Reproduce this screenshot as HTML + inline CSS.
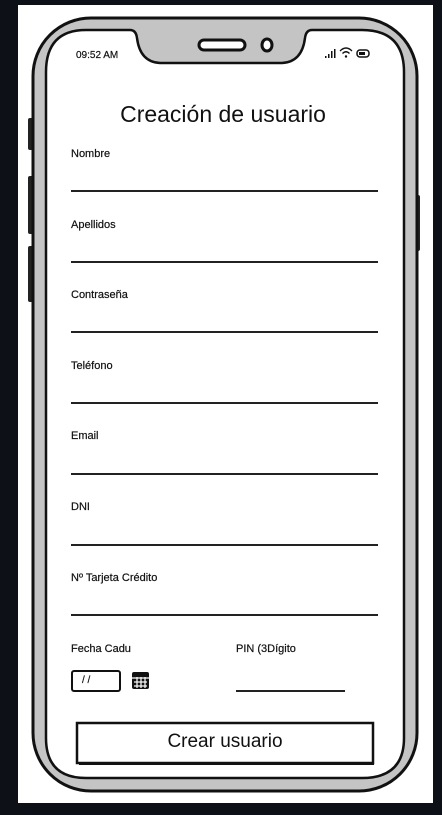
<!DOCTYPE html>
<html><head><meta charset="utf-8"><style>
body{margin:0;width:442px;height:815px;background:#0d1117;position:relative;overflow:hidden;font-family:"Liberation Sans",sans-serif;color:#111}
.t{position:absolute;font-size:11px;-webkit-text-stroke:0.2px #111}
.l{position:absolute;left:71px;width:307px;height:0;border-top:2px solid #222}
</style></head><body>
<div style="position:absolute;left:18px;top:5px;width:415px;height:798px;background:#fff"></div>
<svg width="442" height="815" style="position:absolute;left:0;top:0">
<rect x="28" y="118" width="6" height="32" rx="2" fill="#222"/>
<rect x="28" y="176" width="6" height="58" rx="2" fill="#222"/>
<rect x="28" y="246" width="6" height="56" rx="2" fill="#222"/>
<rect x="413" y="195" width="7" height="56" rx="2" fill="#222"/>
<rect x="33" y="18" width="384" height="773" rx="58" fill="#c4c4c4" stroke="#111" stroke-width="3"/>
<path d="M86 30 H130 Q136 30 137 38 Q140 62 160 63 H282 Q302 62 305 38 Q306 30 312 30 H362 Q404 30 404 72 V738 Q404 778 362 778 H86 Q46 778 46 738 V72 Q46 30 86 30 Z" fill="#fff" stroke="#111" stroke-width="2.5"/>
<rect x="199" y="40" width="46" height="10" rx="5" fill="#fff" stroke="#111" stroke-width="3"/>
<ellipse cx="267" cy="45" rx="5" ry="6" fill="#fff" stroke="#111" stroke-width="3"/>
<g fill="#111"><rect x="325" y="56" width="1.5" height="2"/><rect x="328" y="54" width="1.5" height="4"/><rect x="331" y="51" width="1.5" height="7"/><rect x="334" y="49" width="1.5" height="9"/></g>
<path d="M340 51 Q346 45 352 51 M342.5 53.5 Q346 50 349.5 53.5" stroke="#111" stroke-width="1.3" fill="none"/><circle cx="346" cy="56.5" r="1.2" fill="#111"/>
<rect x="357" y="50" width="12" height="7" rx="3" fill="none" stroke="#111" stroke-width="1.5"/><rect x="359" y="52" width="6" height="3" fill="#111"/>
<rect x="77" y="723" width="296" height="40" fill="#fff" stroke="#111" stroke-width="2.5"/>
<path d="M373 725 V764 H79" stroke="#111" stroke-width="2" fill="none"/>
<rect x="72" y="671" width="48" height="20" rx="2" fill="#fff" stroke="#111" stroke-width="2"/>
<rect x="132" y="672" width="17" height="17" rx="2" fill="#111"/>
<g stroke="#fff" stroke-width="1.2"><line x1="132" y1="678" x2="149" y2="678"/><line x1="134" y1="682" x2="147" y2="682"/><line x1="134" y1="686" x2="147" y2="686"/><line x1="137" y1="677" x2="137" y2="688"/><line x1="141" y1="677" x2="141" y2="688"/><line x1="145" y1="677" x2="145" y2="688"/></g>
<line x1="236" y1="691" x2="345" y2="691" stroke="#222" stroke-width="2"/>
</svg>
<div class="t" style="left:76px;top:50px;font-size:10px">09:52 AM</div>
<div style="position:absolute;left:0;width:446px;text-align:center;top:101px;font-size:23px">Creación de usuario</div>
<div class="t" style="left:71px;top:148px">Nombre</div><div class="l" style="top:190px"></div>
<div class="t" style="left:71px;top:219px">Apellidos</div><div class="l" style="top:261px"></div>
<div class="t" style="left:71px;top:289px">Contraseña</div><div class="l" style="top:331px"></div>
<div class="t" style="left:71px;top:360px">Teléfono</div><div class="l" style="top:402px"></div>
<div class="t" style="left:71px;top:430px">Email</div><div class="l" style="top:473px"></div>
<div class="t" style="left:71px;top:501px">DNI</div><div class="l" style="top:544px"></div>
<div class="t" style="left:71px;top:572px">Nº Tarjeta Crédito</div><div class="l" style="top:614px"></div>
<div class="t" style="left:71px;top:643px">Fecha Cadu</div>
<div class="t" style="left:236px;top:643px">PIN (3Dígito</div>
<div class="t" style="left:82px;top:675px;font-size:10px">/ /</div>
<div style="position:absolute;left:77px;width:296px;top:731px;text-align:center;font-size:19px">Crear usuario</div>
</body></html>
